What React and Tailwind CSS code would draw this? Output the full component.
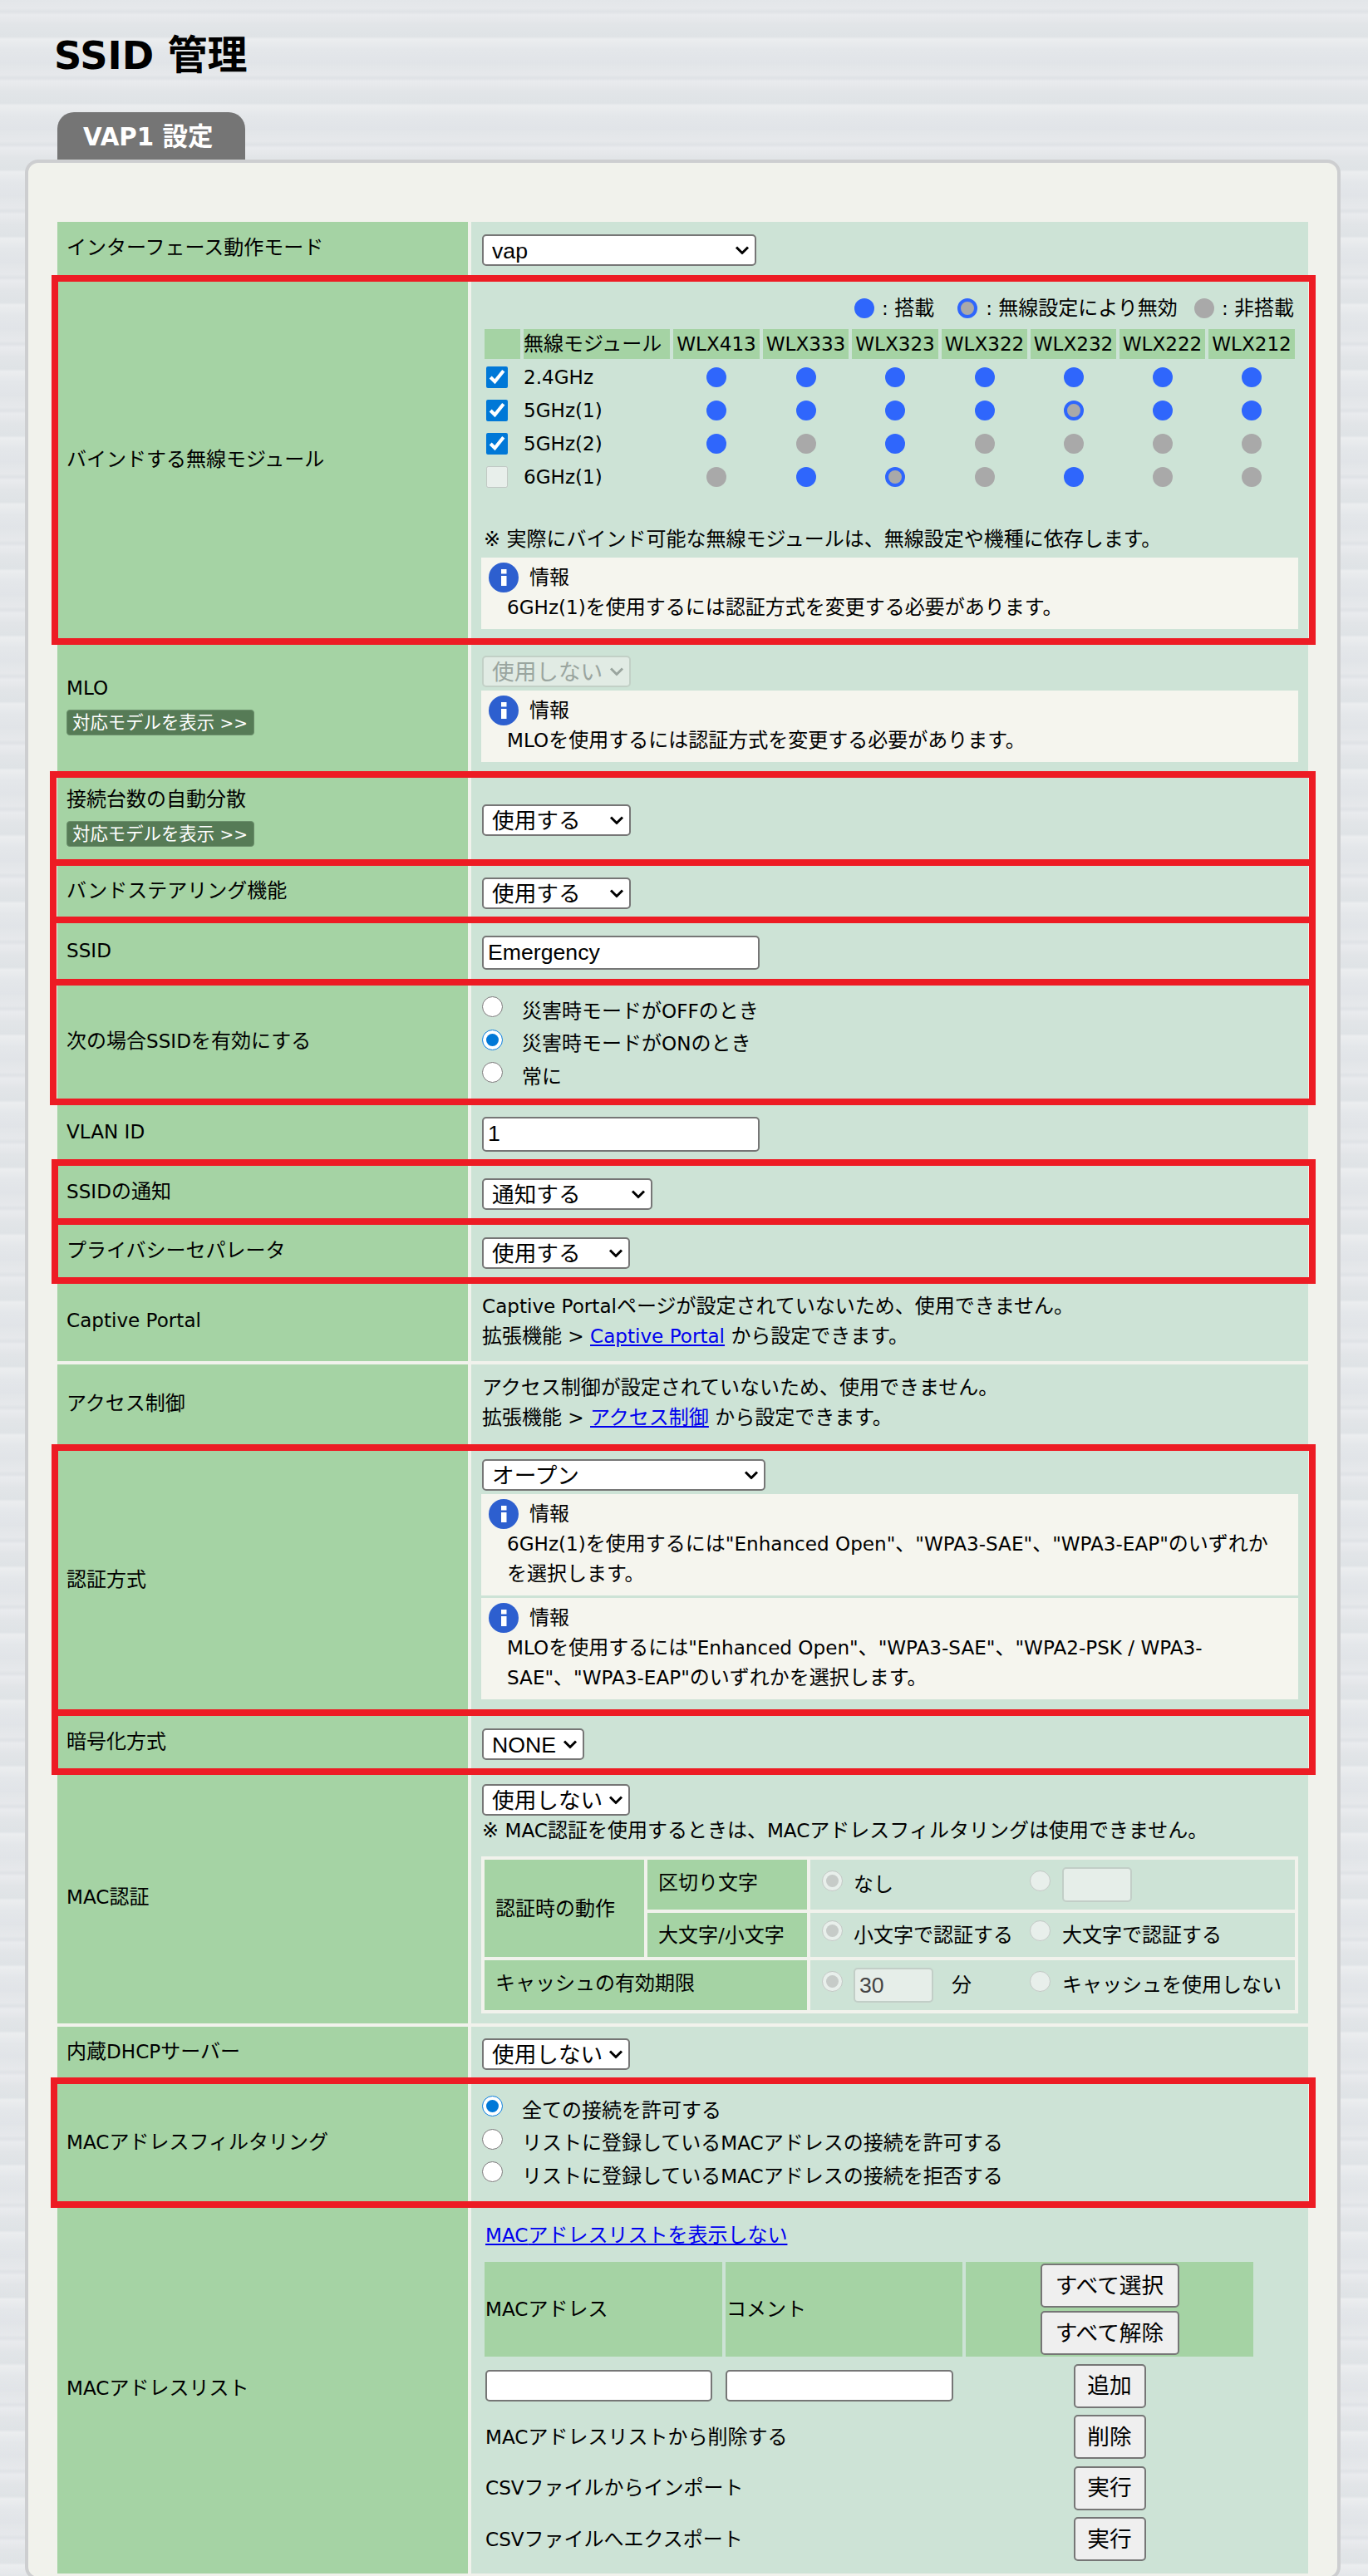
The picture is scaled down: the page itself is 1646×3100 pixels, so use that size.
import React from "react";

const BODY = "font-['DejaVu_Sans','Noto_Sans_CJK_JP',sans-serif]";
const CTRL = "font-['Liberation_Sans','Noto_Sans_CJK_JP',sans-serif] text-[26.67px]";

function mix(text, cls = "text-[23.1px]") {
  return text.split(/([\x20-\x7e]+)/).map((part, i) =>
    /[\x20-\x7e]/.test(part) ? (
      <span key={i} className={cls}>{part}</span>
    ) : (
      <React.Fragment key={i}>{part}</React.Fragment>
    )
  );
}

function Chevron({ color = "#000" }) {
  return (
    <svg width="18" height="11" viewBox="0 0 18 11" className="absolute right-[8px] top-1/2 -translate-y-1/2 pointer-events-none">
      <path d="M2 2 L9 9 L16 2" fill="none" stroke={color} strokeWidth="3" />
    </svg>
  );
}

function Select({ width, text, disabled }) {
  return (
    <div className={`relative h-[38px] ml-px shrink-0 ${width}`}>
      {disabled ? (
        <select disabled className={`appearance-none block w-full h-full bg-[#e1ebe4] border-2 border-[#c2d0c6] rounded-[5px] pl-[10px] text-[#9aa59f] ${CTRL}`}>
          <option>{text}</option>
        </select>
      ) : (
        <select className={`appearance-none block w-full h-full bg-white border-2 border-[#767676] rounded-[5px] pl-[10px] text-black ${CTRL}`}>
          <option>{text}</option>
        </select>
      )}
      <Chevron color={disabled ? "#9aa59f" : "#000"} />
    </div>
  );
}

function TextInput({ width, value = "", height = "h-[42px]" }) {
  return (
    <input
      readOnly
      value={value}
      className={`block ml-px bg-white border-2 border-[#767676] rounded-[5px] pl-[5px] text-black ${width} ${height} ${CTRL}`}
    />
  );
}

function DisabledInput({ width, value = "" }) {
  return (
    <input
      disabled
      readOnly
      value={value}
      className={`block h-[42px] bg-[#e6eee9] border-2 border-[#c2cec7] rounded-[5px] pl-[5px] text-[#444] ${width} ${CTRL}`}
    />
  );
}

function Button({ children, width }) {
  return (
    <button className={`h-[53px] bg-[#efefef] border-2 border-[#767676] rounded-[5px] text-black ${width} ${CTRL}`}>
      {children}
    </button>
  );
}

function InfoIcon() {
  return (
    <svg width="36" height="36" viewBox="0 0 36 36" className="shrink-0">
      <circle cx="18" cy="18" r="18" fill="#2d5fcf" />
      <rect x="15" y="8" width="6.5" height="5.5" fill="#fff" />
      <rect x="15" y="16" width="6.5" height="12" fill="#fff" />
    </svg>
  );
}

function Info({ children }) {
  return (
    <div className="bg-[#f5f5ee] pt-[6px] pb-[8px] pl-[9px] w-[983px]">
      <div className="flex items-center h-[36px]">
        <InfoIcon />
        <span className="ml-[13px]">情報</span>
      </div>
      <div className="pl-[22px] whitespace-nowrap">{children}</div>
    </div>
  );
}

function ModelButton() {
  return (
    <div className="mt-[8px] w-[226px] h-[31px] bg-[#567b56] border border-[#6b8f6b] rounded-[4px] pl-[6px] text-white text-[21.4px] leading-[29px] whitespace-nowrap">
      {mix("対応モデルを表示 >>", "text-[20px]")}
    </div>
  );
}

function Red({ left = "-left-[8px]" }) {
  return <div className={`absolute -top-2 -bottom-1 -right-[9px] border-[8px] border-[#ed1c24] pointer-events-none z-10 ${left}`} />;
}

function Row({ h, label, extra, red, labelPad = "pb-[6px]", valueClass = "justify-center", children }) {
  return (
    <div className={`relative grid grid-cols-[494px_1fr] gap-x-1 ${h}`}>
      <div className={`bg-[#a5d3a4] pl-[11px] flex flex-col justify-center items-start ${labelPad}`}>
        <div>{mix(label)}</div>
        {extra}
      </div>
      <div className={`bg-[#cde3d6] px-3 flex flex-col ${valueClass}`}>{children}</div>
      {red && <Red left={red === true ? undefined : red} />}
    </div>
  );
}

function Dot({ kind }) {
  if (kind === "b") return <div className="w-6 h-6 rounded-full bg-[#2f66fc] shrink-0" />;
  if (kind === "g") return <div className="w-6 h-6 rounded-full bg-[#a9a9a9] shrink-0" />;
  return <div className="w-6 h-6 rounded-full bg-[#a9a9a9] border-[4px] border-[#2f66fc] shrink-0" />;
}

function Radio({ checked, disabled, mb = "mb-[10px]" }) {
  return (
    <input
      type="radio"
      readOnly
      checked={!!checked}
      disabled={!!disabled}
      className={`w-[25px] h-[25px] m-0 shrink-0 accent-[#0078d7] ${mb}`}
    />
  );
}

function RadioLine({ checked, children }) {
  return (
    <div className="flex items-center h-[39.5px] ml-px">
      <Radio checked={checked} />
      <span className="ml-[23px]">{children}</span>
    </div>
  );
}

const MODELS = ["WLX413", "WLX333", "WLX323", "WLX322", "WLX232", "WLX222", "WLX212"];
const MODULES = [
  { name: "2.4GHz", on: true, dots: "bbbbbbb" },
  { name: "5GHz(1)", on: true, dots: "bbbbdbb" },
  { name: "5GHz(2)", on: true, dots: "bgbgggg" },
  { name: "6GHz(1)", on: false, dots: "gbdgbgg" },
];

export default function App() {
  return (
    <div className={`h-[3100px] overflow-hidden text-black text-[24px] leading-[36px] ${BODY} bg-[repeating-linear-gradient(180deg,#e3e6e9_0px,#e6e8eb_10px,#dfe2e6_14px,#e9ebee_18px,#e2e5e8_30px,#dfe3e6_44px,#ebedef_47px,#e4e7ea_60px,#e1e4e8_76px,#e3e6e9_80px)]`}>
      <div className="w-[1583px] ml-[30px]">
        <h1 className="pt-[41px] ml-[35px] text-[48px] leading-[50px] font-bold">{mix("SSID 管理", "text-[46.3px]")}</h1>
        <div className="mt-[43px] ml-[39px] w-[226px] h-[57px] bg-[#757575] rounded-t-[20px] pl-[31px] text-white font-bold text-[30.5px] leading-[60px]">
          {mix("VAP1 設定", "text-[29.3px]")}
        </div>
        <div className="bg-[#f1f2ec] border-[4px] border-[#cdced0] rounded-2xl pt-[71px] px-[35px] pb-1 flex flex-col gap-1">
          <Row h="h-[68px]" label="インターフェース動作モード">
            <Select width="w-[330px]" text="vap" />
          </Row>

          <Row h="h-[433px]" label="バインドする無線モジュール" red="-left-[7px]" valueClass="justify-start">
            <div className="mt-[19px] h-[26px] flex justify-end items-center pr-[5px] leading-[26px] whitespace-nowrap">
              <Dot kind="b" />
              <span className="ml-[9px]">{mix(": ")}搭載</span>
              <div className="ml-[28px]"><Dot kind="d" /></div>
              <span className="ml-[10px]">{mix(": ")}無線設定により無効</span>
              <div className="ml-[20px]"><Dot kind="g" /></div>
              <span className="ml-[9px]">{mix(": ")}非搭載</span>
            </div>
            <div className="mt-[12px] ml-1 grid grid-cols-[43px_176px_104px_103px_104px_103px_103px_103px_104px] gap-x-1">
              <div className="bg-[#a5d3a4] h-[36px] mb-[2px]" />
              <div className="bg-[#a5d3a4] h-[36px] leading-[36px]">無線モジュール</div>
              {MODELS.map((m) => (
                <div key={m} className="bg-[#a5d3a4] h-[36px] text-center whitespace-nowrap">{mix(m)}</div>
              ))}
              {MODULES.map((mod) => (
                <React.Fragment key={mod.name}>
                  <div className="h-[40px] flex items-center pl-[2px]">
                    {mod.on ? (
                      <input type="checkbox" readOnly checked className="w-[26px] h-[26px] m-0 accent-[#0078d7]" />
                    ) : (
                      <input type="checkbox" disabled className="w-[26px] h-[26px] m-0" />
                    )}
                  </div>
                  <div className="h-[40px] leading-[40px]">{mix(mod.name)}</div>
                  {mod.dots.split("").map((d, i) => (
                    <div key={i} className="h-[40px] flex items-center justify-center">
                      <Dot kind={d} />
                    </div>
                  ))}
                </React.Fragment>
              ))}
            </div>
            <div className="mt-[37px] ml-[3px] whitespace-nowrap">{mix("※ 実際にバインド可能な無線モジュールは、無線設定や機種に依存します。")}</div>
            <div className="mt-[4px]">
              <Info>{mix("6GHz(1)を使用するには認証方式を変更する必要があります。")}</Info>
            </div>
          </Row>

          <Row h="h-[156px]" label="MLO" labelPad="pb-[14px]" extra={<ModelButton />} valueClass="justify-start pt-[13px]">
            <Select width="w-[179px]" text="使用しない" disabled />
            <div className="mt-[4px]">
              <Info>{mix("MLOを使用するには認証方式を変更する必要があります。")}</Info>
            </div>
          </Row>

          <Row h="h-[102px]" label="接続台数の自動分散" labelPad="pb-[12px]" red="-left-[9px]" extra={<ModelButton />}>
            <Select width="w-[179px]" text="使用する" />
          </Row>
          <Row h="h-[65px]" label="バンドステアリング機能" red="-left-[9px]">
            <Select width="w-[179px]" text="使用する" />
          </Row>
          <Row h="h-[71px]" label="SSID" red="-left-[9px]">
            <TextInput width="w-[334px]" height="h-[41px]" value="Emergency" />
          </Row>
          <Row h="h-[140px]" label="次の場合SSIDを有効にする" red="-left-[9px]">
            <RadioLine>{mix("災害時モードがOFFのとき")}</RadioLine>
            <RadioLine checked>{mix("災害時モードがONのとき")}</RadioLine>
            <RadioLine>常に</RadioLine>
          </Row>
          <Row h="h-[69px]" label="VLAN ID">
            <TextInput width="w-[334px]" value="1" />
          </Row>
          <Row h="h-[67px]" label="SSIDの通知" red="-left-[7px]">
            <Select width="w-[205px]" text="通知する" />
          </Row>
          <Row h="h-[67px]" label="プライバシーセパレータ" red="-left-[7px]">
            <Select width="w-[178px]" text="使用する" />
          </Row>
          <Row h="h-[93px]" label="Captive Portal" valueClass="justify-center pb-[4px]">
            <div className="ml-px">{mix("Captive Portalページが設定されていないため、使用できません。")}</div>
            <div className="ml-px">
              {mix("拡張機能 > ")}
              <a href="#" className="text-[#0000ee] underline">{mix("Captive Portal")}</a>
              {mix(" から設定できます。")}
            </div>
          </Row>
          <Row h="h-[100px]" label="アクセス制御" valueClass="justify-center pb-[8px]">
            <div className="ml-px">アクセス制御が設定されていないため、使用できません。</div>
            <div className="ml-px">
              {mix("拡張機能 > ")}
              <a href="#" className="text-[#0000ee] underline">アクセス制御</a>
              {mix(" から設定できます。")}
            </div>
          </Row>

          <Row h="h-[315px]" label="認証方式" red="-left-[7px]" valueClass="justify-start pt-[10px]">
            <Select width="w-[341px]" text="オープン" />
            <div className="mt-[4px] flex flex-col gap-[3px]">
              <Info>
                {mix('6GHz(1)を使用するには"Enhanced Open"、"WPA3-SAE"、"WPA3-EAP"のいずれか')}
                <br />
                を選択します。
              </Info>
              <Info>
                {mix('MLOを使用するには"Enhanced Open"、"WPA3-SAE"、"WPA2-PSK / WPA3-')}
                <br />
                {mix('SAE"、"WPA3-EAP"のいずれかを選択します。')}
              </Info>
            </div>
          </Row>
          <Row h="h-[67px]" label="暗号化方式" red="-left-[7px]">
            <Select width="w-[123px]" text="NONE" />
          </Row>

          <Row h="h-[299px]" label="MAC認証" valueClass="justify-start pt-[11px]">
            <Select width="w-[178px]" text="使用しない" />
            <div className="mt-[0px] ml-px whitespace-nowrap">{mix("※ MAC認証を使用するときは、MACアドレスフィルタリングは使用できません。")}</div>
            <div className="mt-[13px] w-[983px] bg-[#f1f2ec] p-1 grid grid-cols-[192px_192px_1fr] grid-rows-[60px_53px_60px] gap-1">
              <div className="row-span-2 bg-[#a5d3a4] flex items-center pl-[13px]">認証時の動作</div>
              <div className="bg-[#a5d3a4] flex items-center pl-[13px] pb-1">区切り文字</div>
              <div className="bg-[#cde3d6] flex items-center">
                <div className="w-[264px] pl-[14px] flex items-center">
                  <Radio checked disabled />
                  <span className="ml-[13px]">なし</span>
                </div>
                <div className="flex items-center">
                  <Radio disabled />
                  <div className="ml-[14px]"><DisabledInput width="w-[84px]" /></div>
                </div>
              </div>
              <div className="bg-[#a5d3a4] flex items-center pl-[13px]">{mix("大文字/小文字")}</div>
              <div className="bg-[#cde3d6] flex items-center">
                <div className="w-[264px] pl-[14px] flex items-center">
                  <Radio checked disabled />
                  <span className="ml-[13px]">小文字で認証する</span>
                </div>
                <div className="flex items-center">
                  <Radio disabled />
                  <span className="ml-[14px]">大文字で認証する</span>
                </div>
              </div>
              <div className="col-span-2 bg-[#a5d3a4] flex items-center pl-[13px] pb-1">キャッシュの有効期限</div>
              <div className="bg-[#cde3d6] flex items-center">
                <div className="w-[264px] pl-[14px] flex items-center">
                  <Radio checked disabled />
                  <div className="ml-[13px]"><DisabledInput width="w-[96px]" value="30" /></div>
                  <span className="ml-[22px]">分</span>
                </div>
                <div className="flex items-center">
                  <Radio disabled />
                  <span className="ml-[14px] whitespace-nowrap">キャッシュを使用しない</span>
                </div>
              </div>
            </div>
          </Row>

          <Row h="h-[65px]" label="内蔵DHCPサーバー">
            <Select width="w-[178px]" text="使用しない" />
          </Row>
          <Row h="h-[145px]" label="MACアドレスフィルタリング" red="-left-[8px]" valueClass="justify-start pt-[12px]">
            <RadioLine checked>全ての接続を許可する</RadioLine>
            <RadioLine>{mix("リストに登録しているMACアドレスの接続を許可する")}</RadioLine>
            <RadioLine>{mix("リストに登録しているMACアドレスの接続を拒否する")}</RadioLine>
          </Row>
          <Row h="h-[440px]" label="MACアドレスリスト" valueClass="justify-start pt-[15px]">
            <div className="ml-[5px]">
              <a href="#" className="text-[#0000ee] underline">{mix("MACアドレスリストを表示しない")}</a>
            </div>
            <div className="mt-[14px] ml-1 grid grid-cols-[286px_285px_346px] gap-x-1 gap-y-[8.5px] items-center">
              <div className="h-[114px] bg-[#a5d3a4] flex items-center pl-px">{mix("MACアドレス")}</div>
              <div className="h-[114px] bg-[#a5d3a4] flex items-center pl-px">コメント</div>
              <div className="h-[114px] bg-[#a5d3a4] flex flex-col items-center justify-center gap-1">
                <Button width="w-[167px]">すべて選択</Button>
                <Button width="w-[167px]">すべて解除</Button>
              </div>

              <TextInput width="w-[273px]" height="h-[38px]" />
              <div className="-ml-px"><TextInput width="w-[274px]" height="h-[38px]" /></div>
              <div className="flex justify-center"><Button width="w-[87px]">追加</Button></div>

              <div className="col-span-2 pl-px">{mix("MACアドレスリストから削除する")}</div>
              <div className="flex justify-center"><Button width="w-[87px]">削除</Button></div>

              <div className="col-span-2 pl-px">{mix("CSVファイルからインポート")}</div>
              <div className="flex justify-center"><Button width="w-[87px]">実行</Button></div>

              <div className="col-span-2 pl-px">{mix("CSVファイルへエクスポート")}</div>
              <div className="flex justify-center"><Button width="w-[87px]">実行</Button></div>
            </div>
          </Row>
        </div>
      </div>
    </div>
  );
}
